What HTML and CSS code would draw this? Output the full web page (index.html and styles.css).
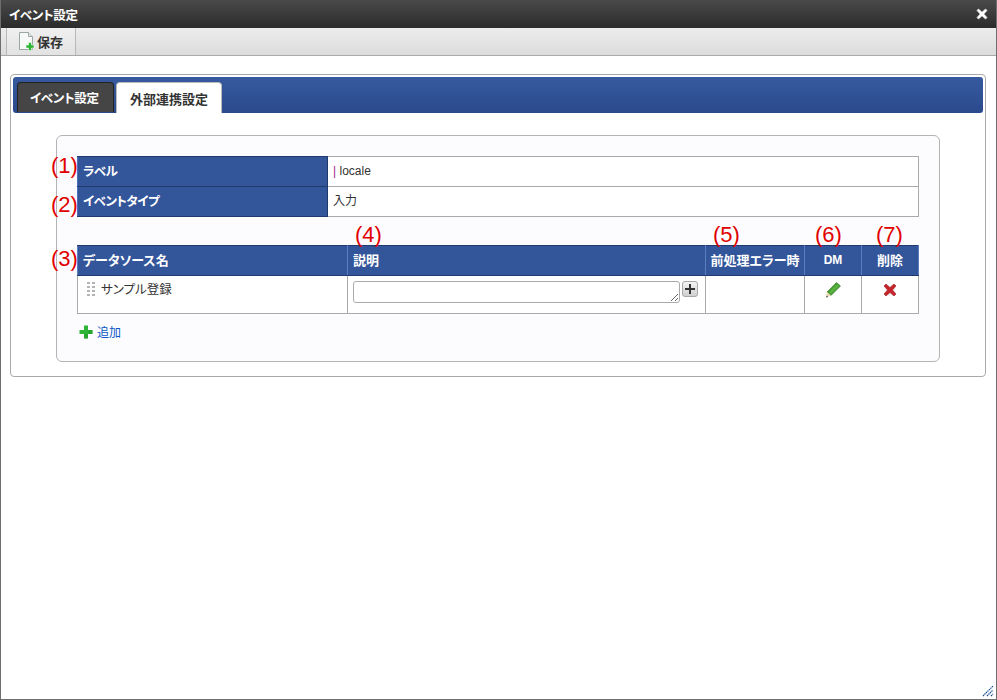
FILE: index.html
```html
<!DOCTYPE html>
<html lang="ja">
<head>
<meta charset="utf-8">
<title>イベント設定</title>
<link rel="stylesheet" href="styles.css">
</head>
<body>
<div class="window">
  <header class="titlebar">
    <span class="title">イベント設定</span>
    <svg class="close" width="12" height="12" viewBox="0 0 12 12"><path d="M2.500 1 6 4.200 9.500 1 11 2.500 7.800 6 11 9.500 9.500 11 6 7.800 2.500 11 1 9.500 4.200 6 1 2.500z" fill="#fff" stroke="#fff" stroke-width=".6"/></svg>
  </header>
  <div class="toolbar">
    <button class="tool-btn">
      <svg width="18" height="19" viewBox="0 0 18 19"><path d="M1.500 0.500h9l4 4v13h-13z" fill="#f6f9f8" stroke="#9aa7a5"/><path d="M10.500 0.500v4h4" fill="#dfe8e6" stroke="#9aa7a5"/><path d="M10.500 10.500h3v2.500h2.500v3h-2.500v2.500h-3v-2.500h-2.500v-3h2.500z" fill="#2fb536" stroke="#fff" stroke-width=".5"/></svg>
      <span>保存</span>
    </button>
  </div>
  <main class="content">
    <section class="panel">
      <nav class="tabs">
        <div class="tab tab-dark">イベント設定</div>
        <div class="tab tab-active">外部連携設定</div>
      </nav>
      <div class="inner">
        <span class="note n1">(1)</span>
        <span class="note n2">(2)</span>
        <span class="note n3">(3)</span>
        <span class="note n4">(4)</span>
        <span class="note n5">(5)</span>
        <span class="note n6">(6)</span>
        <span class="note n7">(7)</span>
        <table class="form-table">
          <colgroup><col class="c-label"><col></colgroup>
          <tr><th>ラベル</th><td><span class="bar">|</span> locale</td></tr>
          <tr><th>イベントタイプ</th><td class="raised">入力</td></tr>
        </table>
        <table class="grid-table">
          <colgroup><col class="c1"><col class="c2"><col class="c3"><col class="c4"><col class="c5"></colgroup>
          <thead>
            <tr><th class="left">データソース名</th><th class="left">説明</th><th>前処理エラー時</th><th class="latin">DM</th><th>削除</th></tr>
          </thead>
          <tbody>
            <tr>
              <td class="name-cell">
                <div class="name-wrap">
                  <svg class="grip" width="8" height="16" viewBox="0 0 8 16"><path d="M0 1h3v2H0zM5 1h3v2H5zM0 5h3v2H0zM5 5h3v2H5zM0 9h3v2H0zM5 9h3v2H5zM0 13h3v2H0zM5 13h3v2H5z" fill="#b4b4b4"/></svg>
                  <span>サンプル登録</span>
                </div>
              </td>
              <td class="desc-cell">
                <div class="desc-wrap">
                  <textarea class="desc-input"></textarea>
                  <button class="plus-btn"><svg width="12" height="12" viewBox="0 0 12 12"><path d="M5 1h2v4h4v2H7v4H5V7H1V5h4z" fill="#333"/></svg></button>
                </div>
              </td>
              <td></td>
              <td class="icon-cell">
                <svg width="16" height="16" viewBox="0 0 16 16"><path d="M11.500 0.500 15.500 4 6 13.500 2 10z" fill="#3f9a2e" stroke="#2e7a22" stroke-width=".6"/><path d="M2 10 6 13.500 1 15.500z" fill="#e8d9b4"/><path d="M1.800 13.600 3.200 14.900 1 15.500z" fill="#444"/><path d="M11.500 2 14 4.200 6 12 4 10z" fill="#6cc14e" opacity=".6"/></svg>
              </td>
              <td class="icon-cell delete-cell">
                <svg width="14" height="14" viewBox="0 0 14 14"><path d="M3 1 7 4.500 11 1 13 3 9.500 7 13 11 11 13 7 9.500 3 13 1 11 4.500 7 1 3z" fill="#c6242b" stroke="#a11c22" stroke-width=".6"/></svg>
              </td>
            </tr>
          </tbody>
        </table>
        <a class="add-link">
          <svg width="14" height="14" viewBox="0 0 14 14"><path d="M5 0.500h4v4.500h4.500v4h-4.500v4.500h-4v-4.500h-4.500v-4h4.500z" fill="#2fb536"/><path d="M5 9h4v4.500H5zM9 5h4.500v4H9z" fill="#1f9a2a" opacity=".5"/></svg>
          <span>追加</span>
        </a>
      </div>
    </section>
  </main>
  <svg class="resize" width="12" height="12" viewBox="0 0 12 12"><path d="M1 11 11 1M5 11 11 5M9 11 11 9" stroke="#14498f" stroke-width="1.200" stroke-dasharray="1.400 .7" fill="none"/></svg>
</div>
</body>
</html>
```
FILE: styles.css
```css
* { box-sizing: border-box; }
html, body { margin: 0; padding: 0; background: #fff; }
body {
  font-family: "Liberation Sans", "Noto Sans CJK JP", sans-serif;
  font-size: 12px;
  color: #333;
  font-feature-settings: "palt";
}
.window {
  position: relative;
  width: 997px;
  height: 700px;
  border: 1px solid #6e6e6e;
  border-top: 0;
  background: #fff;
}
.titlebar {
  height: 28px;
  display: flex;
  align-items: center;
  justify-content: space-between;
  padding: 0 8px;
  background: linear-gradient(#4a4a4a, #2b2b2b);
  color: #fff;
  font-size: 12.500px;
  letter-spacing: -.3px;
  font-weight: bold;
}
.close { display: block; }
.toolbar {
  height: 28px;
  display: flex;
  padding-left: 5px;
  background: linear-gradient(#ececec, #dcdcdc);
  border-bottom: 1px solid #a8a8a8;
}
.tool-btn {
  display: flex;
  align-items: center;
  gap: 1px;
  height: 27px;
  width: 70px;
  padding: 0 0 0 11px;
  border: 0;
  border-left: 1px solid #b8b8b8;
  border-right: 1px solid #b8b8b8;
  background: linear-gradient(#f0f0f0, #e2e2e2);
  font: bold 13px "Liberation Sans", "Noto Sans CJK JP", sans-serif;
  color: #333;
}
.content { padding: 18px 10px 0 9px; }
.panel {
  height: 303px;
  padding: 2px;
  border: 1px solid #aaa;
  border-radius: 4px;
  background: #fff;
}
.tabs {
  height: 36px;
  display: flex;
  align-items: flex-end;
  gap: 2px;
  padding: 0 0 0 4px;
  border-radius: 3px;
  background: linear-gradient(#36599f, #2b4a8c);
}
.tab {
  height: 31px;
  padding: 0 13px;
  display: flex;
  align-items: center;
  font-size: 13px;
  font-weight: bold;
  white-space: nowrap;
  border-radius: 4px 4px 0 0;
}
.tab-dark {
  width: 97px;
  padding: 0 12px;
  background: #454545;
  border: 1px solid #222;
  border-bottom: 0;
  color: #fff;
  height: 30px;
  margin-bottom: 1px;
  font-size: 12.500px;
  letter-spacing: -.3px;
}
.tab-active {
  width: 106px;
  height: 31px;
  background: #fff;
  color: #333;
  border: 1px solid #bbb;
  border-bottom: 0;
}
.inner {
  position: relative;
  width: 884px;
  height: 227px;
  margin: 22px 0 0 43px;
  padding: 20px 20px 0;
  border: 1px solid #b4b4b4;
  border-radius: 6px;
  background: #fcfcff;
}
table {
  border-collapse: collapse;
  table-layout: fixed;
  width: 842px;
  background: #fff;
}
.c-label { width: 250px; }
.form-table th, .form-table td { height: 30px; padding: 0 5px 2px; font-weight: normal; }
.form-table th {
  text-align: left;
  color: #fff;
  font-size: 12.500px;
  letter-spacing: -.5px;
  font-weight: bold;
  background: #33559a;
  border: 1px solid #203a70;
  border-left-color: #4a70b8;
}
.form-table td { border: 1px solid #aaa; }
.form-table td.raised { padding-bottom: 4px; }
.bar { color: #9a1a8a; }
.grid-table { margin-top: 28px; }
.c1 { width: 270px; }
.c2 { width: 358px; }
.c3 { width: 99px; }
.c4 { width: 57px; }
.grid-table th {
  height: 30px;
  padding: 0 0 2px;
  color: #fff;
  font-weight: bold;
  font-size: 13px;
  background: #33559a;
  border: 1px solid #203a70;
  border-left-color: #5a7fc0;
  border-right-color: #5a7fc0;
  white-space: nowrap;
}
.grid-table th.latin { font-size: 12px; }
.grid-table th.left { text-align: left; padding-left: 5px; }
.grid-table td {
  height: 38px;
  padding: 0;
  border: 1px solid #aaa;
  vertical-align: top;
}
.name-wrap {
  display: flex;
  align-items: center;
  gap: 6px;
  padding: 3px 0 0 9px;
  font-size: 12.500px;
}
.grip { display: block; }
.desc-wrap {
  display: flex;
  gap: 2px;
  padding: 5px 0 0 5px;
  align-items: flex-start;
}
.desc-input {
  display: block;
  width: 327px;
  height: 22px;
  margin: 0;
  padding: 0;
  border: 1px solid #aaa;
  border-radius: 3px;
  background: #fff;
}
.plus-btn {
  width: 16px;
  height: 16px;
  padding: 0;
  display: flex;
  align-items: center;
  justify-content: center;
  border: 1px solid #a8a8a8;
  border-radius: 3px;
  background: linear-gradient(#f4f4f4, #cfcfcf);
}
.icon-cell { text-align: center; }
.grid-table td.icon-cell { padding-top: 6px; }
.grid-table td.delete-cell { padding-top: 7px; }
.icon-cell svg { display: block; margin: 0 auto; }
.add-link {
  display: flex;
  align-items: center;
  gap: 4px;
  margin: 9px 0 0 2px;
  color: #0b55c4;
}
.note {
  position: absolute;
  font-size: 22px;
  line-height: 24px;
  color: #e00000;
  white-space: nowrap;
}
.n1 { left: -6px; top: 18px; }
.n2 { left: -6px; top: 57px; }
.n3 { left: -6px; top: 111px; }
.n4 { left: 298px; top: 87px; }
.n5 { left: 656px; top: 87px; }
.n6 { left: 758px; top: 87px; }
.n7 { left: 819px; top: 87px; }
.resize { position: absolute; right: 2px; bottom: 2px; }
```
